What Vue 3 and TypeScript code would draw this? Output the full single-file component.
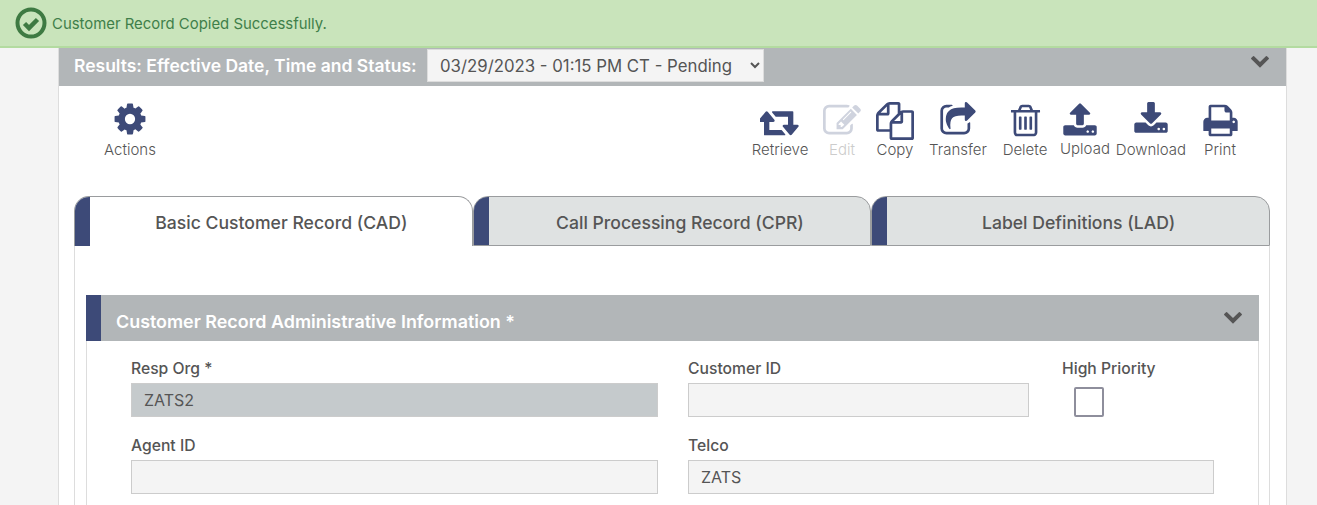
<script setup lang="ts">
interface Tool { label: string; width: number; icon: string; box: string; size: number; shift?: number; disabled?: boolean; raised?: boolean }

const chevron = 'M1683 808l-742 741q-19 19-45 19t-45-19l-742-741q-19-19-19-45.500t19-45.500l166-165q19-19 45-19t45 19l531 531 531-531q19-19 45-19t45 19l166 165q19 19 19 45.500t-19 45.500z'
const cog = 'M1152 896q0-106-75-181t-181-75-181 75-75 181 75 181 181 75 181-75 75-181zm512-109v222q0 12-8 23t-20 13l-185 28q-19 54-39 91 35 50 107 138 10 12 10 25t-9 23q-27 37-99 108t-94 71q-12 0-26-9l-138-108q-44 23-91 38-16 136-29 186-7 28-36 28h-222q-14 0-24.500-8.500t-11.500-21.500l-28-184q-49-16-90-37l-141 107q-10 9-25 9-14 0-25-11-126-114-165-168-7-10-7-23 0-12 8-23 15-21 51-66.500t54-70.500q-27-50-41-99l-183-27q-13-2-21-12.500t-8-23.500v-222q0-12 8-23t19-13l186-28q14-46 39-92-40-57-107-138-10-12-10-24 0-10 9-23 26-36 98.500-107.500t94.500-71.500q13 0 26 10l138 107q44-23 91-38 16-136 29-186 7-28 36-28h222q14 0 24.500 8.500t11.500 21.500l28 184q49 16 90 37l142-107q9-9 24-9 13 0 25 10 129 119 165 170 7 8 7 22 0 12-8 23-15 21-51 66.500t-54 70.500q26 50 41 98l183 28q13 2 21 12.500t8 23.500z'

const tools: Tool[] = [
  { label: 'Retrieve', width: 60, size: 40, box: '0 0 1920 1792', icon: 'M1216 1504q0 13-9.500 22.500t-22.500 9.500h-960q-8 0-13.500-2t-9-7-5.500-8-3-11.500-1-11.500v-600h-192q-26 0-45-19t-19-45q0-24 15-41l320-384q19-22 49-22t49 22l320 384q15 17 15 41 0 26-19 45t-45 19h-192v384h576q16 0 25 11l160 192q7 10 7 21zm640-416q0 24-15 41l-320 384q-20 23-49 23t-49-23l-320-384q-15-17-15-41 0-26 19-45t45-19h192v-384h-576q-16 0-25-12l-160-192q-7-9-7-20 0-13 9.500-22.500t22.500-9.500h960q8 0 13.500 2t9 7 5.500 8 3 11.500 1 11.500v600h192q26 0 45 19t19 45z' },
  { label: 'Edit', width: 64, size: 38, box: '0 0 1792 1792', disabled: true, icon: 'M888 1184l116-116-152-152-116 116v56h96v96h56zm440-720q-16-16-33 1l-350 350q-17 17-1 33t33-1l350-350q17-17 1-33zm80 594v190q0 119-84.500 203.500t-203.500 84.500h-832q-119 0-203.500-84.500t-84.500-203.500v-832q0-119 84.500-203.500t203.500-84.500h832q63 0 117 25 15 7 18 23 3 17-9 29l-49 49q-14 14-32 8-23-6-45-6h-832q-66 0-113 47t-47 113v832q0 66 47 113t113 47h832q66 0 113-47t47-113v-126q0-13 9-22l64-64q15-15 35-7t20 29zm-96-738l288 288-672 672h-288v-288zm444 132l-92 92-288-288 92-92q28-28 68-28t68 28l152 152q28 28 28 68t-28 68z' },
  { label: 'Copy', width: 42, size: 38, box: '0 0 1792 1792', icon: 'M1696 384q40 0 68 28t28 68v1216q0 40-28 68t-68 28h-960q-40 0-68-28t-28-68v-288h-544q-40 0-68-28t-28-68v-672q0-40 20-88t48-76l408-408q28-28 76-48t88-20h416q40 0 68 28t28 68v328q68-40 128-40h416zm-544 213l-299 299h299v-299zm-640-384l-299 299h299v-299zm196 647l316-316v-416h-384v416q0 40-28 68t-68 28h-416v640h512v-256q0-40 20-88t48-76zm956 804v-1152h-384v416q0 40-28 68t-68 28h-416v640h896z' },
  { label: 'Transfer', width: 84, size: 38, box: '0 0 1792 1792', icon: 'M1472 989v259q0 119-84.500 203.500t-203.500 84.500h-832q-119 0-203.500-84.500t-84.500-203.500v-832q0-119 84.500-203.500t203.500-84.500h255q13 0 22.500 9.500t9.500 22.500q0 27-26 32-77 26-133 60-10 4-16 4h-112q-66 0-113 47t-47 113v832q0 66 47 113t113 47h832q66 0 113-47t47-113v-214q0-19 18-29 28-13 54-37 16-16 35-8 21 9 21 29zm237-496l-384 384q-18 19-45 19-12 0-25-5-39-17-39-59v-192h-160q-323 0-438 131-119 137-74 473 3 23-20 34-8 2-12 2-16 0-26-13-10-14-21-31t-39.500-68.500-49.500-99.500-38.500-114-17.500-122q0-49 3.500-91t14-90 28-88 47-81.500 68.500-74 94.500-61.500 124.500-48.500 159.500-30.500 196.500-11h160v-192q0-42 39-59 13-5 25-5 26 0 45 19l384 384q19 19 19 45t-19 45z' },
  { label: 'Delete', width: 50, size: 37, box: '0 0 1792 1792', icon: 'M704 736v576q0 14-9 23t-23 9h-64q-14 0-23-9t-9-23v-576q0-14 9-23t23-9h64q14 0 23 9t9 23zm256 0v576q0 14-9 23t-23 9h-64q-14 0-23-9t-9-23v-576q0-14 9-23t23-9h64q14 0 23 9t9 23zm256 0v576q0 14-9 23t-23 9h-64q-14 0-23-9t-9-23v-576q0-14 9-23t23-9h64q14 0 23 9t9 23zm128 724v-948h-896v948q0 22 7 40.500t14.500 27 10.500 8.500h832q3 0 10.500-8.500t14.500-27 7-40.500zm-672-1076h448l-48-117q-7-9-17-11h-317q-10 2-17 11zm928 32v64q0 14-9 23t-23 9h-96v948q0 83-47 143.500t-113 60.500h-832q-66 0-113-58.500t-47-141.500v-952h-96q-14 0-23-9t-9-23v-64q0-14 9-23t23-9h309l70-167q15-37 54-63t79-26h320q40 0 79 26t54 63l70 167h309q14 0 23 9t9 23z' },
  { label: 'Upload', width: 70, size: 36, shift: -10, box: '0 0 1792 1792', raised: true, icon: 'M1344 1472q0-26-19-45t-45-19-45 19-19 45 19 45 45 19 45-19 19-45zm256 0q0-26-19-45t-45-19-45 19-19 45 19 45 45 19 45-19 19-45zm128-224v320q0 40-28 68t-68 28h-1472q-40 0-68-28t-28-68v-320q0-40 28-68t68-28h427q21 56 70.500 92t110.500 36h256q61 0 110.500-36t70.500-92h427q40 0 68 28t28 68zm-325-648q-17 40-59 40h-256v448q0 26-19 45t-45 19h-256q-26 0-45-19t-19-45v-448h-256q-42 0-59-40-17-39 14-69l448-448q18-19 45-19t45 19l448 448q31 30 14 69z' },
  { label: 'Download', width: 62, size: 36, box: '0 0 1792 1792', icon: 'M1344 1344q0-26-19-45t-45-19-45 19-19 45 19 45 45 19 45-19 19-45zm256 0q0-26-19-45t-45-19-45 19-19 45 19 45 45 19 45-19 19-45zm128-224v320q0 40-28 68t-68 28h-1472q-40 0-68-28t-28-68v-320q0-40 28-68t68-28h465l135 136q58 56 136 56t136-56l136-136h464q40 0 68 28t28 68zm-325-569q17 41-14 70l-448 448q-18 19-45 19t-45-19l-448-448q-31-29-14-70 17-39 59-39h256v-448q0-26 19-45t45-19h256q26 0 45 19t19 45v448h256q42 0 59 39z' },
  { label: 'Print', width: 76, size: 37, box: '0 0 1792 1792', icon: 'M448 1536h896v-256h-896v256zm0-640h896v-384h-160q-40 0-68-28t-28-68v-160h-640v640zm1152 64q0-26-19-45t-45-19-45 19-19 45 19 45 45 19 45-19 19-45zm128 0v416q0 13-9.500 22.500t-22.500 9.500h-224v160q0 40-28 68t-68 28h-960q-40 0-68-28t-28-68v-160h-224q-13 0-22.500-9.500t-9.500-22.500v-416q0-79 56.500-135.500t135.500-56.500h64v-544q0-40 28-68t68-28h672q40 0 88 20t76 48l152 152q28 28 48 76t20 88v256h64q79 0 135.500 56.500t56.500 135.500z' },
]

const tabs = [
  { label: 'Basic Customer Record (CAD)', active: true },
  { label: 'Call Processing Record (CPR)', active: false },
  { label: 'Label Definitions (LAD)', active: false },
]

function iconStyle(t: Tool) {
  return {
    width: t.size + 'px',
    height: t.size + 'px',
    marginBottom: 40 - t.size + 'px',
    marginLeft: (t.shift ?? 0) + 'px',
  }
}
</script>

<template>
  <div class="page">
    <div class="banner">
      <svg class="ok" viewBox="0 0 32 32" aria-hidden="true">
        <circle cx="16" cy="16" r="13.500" fill="none" stroke="#3e7a42" stroke-width="4" />
        <path d="M9.500 16.500l4.500 4.500 8.500-8.500" fill="none" stroke="#3e7a42" stroke-width="4.500" />
      </svg>
      <span class="banner-text">Customer Record Copied Successfully.</span>
    </div>

    <main class="card">
      <header class="results">
        <label class="results-label" for="eff">Results: Effective Date, Time and Status:</label>
        <select id="eff" class="results-select">
          <option>03/29/2023 - 01:15 PM CT - Pending</option>
        </select>
        <svg class="chev results-chev" viewBox="0 0 1792 1792" aria-hidden="true"><path :d="chevron" /></svg>
      </header>

      <div class="toolbar">
        <button class="tool actions">
          <svg class="tool-icon cog" viewBox="0 0 1792 1792" aria-hidden="true"><path :d="cog" /></svg>
          <span>Actions</span>
        </button>
        <div class="tool-group">
          <button
            v-for="t in tools"
            :key="t.label"
            class="tool"
            :class="{ disabled: t.disabled, raised: t.raised }"
            :style="{ width: t.width + 'px' }"
          >
            <svg class="tool-icon" :style="iconStyle(t)" :viewBox="t.box" aria-hidden="true"><path :d="t.icon" /></svg>
            <span>{{ t.label }}</span>
          </button>
        </div>
      </div>

      <div class="tabs">
        <div v-for="t in tabs" :key="t.label" class="tab" :class="{ active: t.active }">
          <span class="tab-mark"></span>
          <span class="tab-label">{{ t.label }}</span>
        </div>
      </div>

      <div class="panel">
        <section class="section">
          <div class="section-head">
            <h2>Customer Record Administrative Information *</h2>
            <svg class="chev" viewBox="0 0 1792 1792" aria-hidden="true"><path :d="chevron" /></svg>
          </div>
          <div class="section-body">
            <div class="row">
              <div class="field w527">
                <label>Resp Org *</label>
                <input class="readonly" value="ZATS2" readonly />
              </div>
              <div class="field w341">
                <label>Customer ID</label>
                <input value="" readonly />
              </div>
              <div class="field priority">
                <label>High Priority</label>
                <span class="check"></span>
              </div>
            </div>
            <div class="row">
              <div class="field w527">
                <label>Agent ID</label>
                <input value="" readonly />
              </div>
              <div class="field w526">
                <label>Telco</label>
                <input value="ZATS" readonly />
              </div>
            </div>
          </div>
        </section>
      </div>
    </main>
  </div>
</template>

<style>
html, body { margin: 0; height: 505px; overflow: hidden; background: #f4f4f4; }
</style>

<style scoped>
.page {
  width: 1317px;
  height: 505px;
  overflow: hidden;
  font-family: Inter, "Liberation Sans", sans-serif;
  color: #555;
}
.banner {
  height: 46px;
  box-sizing: content-box;
  display: flex;
  align-items: center;
  gap: 5px;
  padding-left: 15px;
  background: #c9e4bb;
  border-bottom: 2px solid #b3dba0;
  color: #3f7f4a;
  font-size: 14.900px;
}
.banner-text { margin-top: 2px; }
.ok { width: 32px; height: 32px; flex: none; }
.card {
  width: 1229px;
  margin-left: 58px;
  box-sizing: border-box;
  background: #fff;
  border-left: 1px solid #ddd;
  border-right: 1px solid #ddd;
  height: 457px;
}
.results {
  height: 38px;
  display: flex;
  align-items: flex-start;
  background: #b2b6b8;
  padding-left: 15px;
}
.results-label {
  color: #fff;
  font-weight: 600;
  font-size: 17.500px;
  line-height: 36px;
  width: 353px;
  white-space: nowrap;
}
.results-select {
  width: 337px;
  height: 33px;
  margin-top: 1px;
  padding-left: 8px;
  background: #f4f4f4;
  border: 1px solid #ddd;
  border-radius: 0;
  font-family: inherit;
  font-size: 16.800px;
  color: #555;
}
.chev { width: 20px; height: 20px; fill: #555; flex: none; }
.results-chev { margin-left: auto; margin-right: 16px; margin-top: 2px; }
.toolbar {
  height: 110px;
  display: flex;
  justify-content: space-between;
  padding: 16px 28px 0 28px;
  box-sizing: border-box;
}
.tool {
  border: 0;
  background: none;
  padding: 0;
  font-family: inherit;
  font-size: 15px;
  font-weight: 300;
  color: #555;
  display: flex;
  flex-direction: column;
  align-items: center;
  white-space: nowrap;
  height: 60px;
}
.tool span { line-height: 18px; margin-top: -1px; }
.tool-icon { fill: #3d4a78; flex: none; }
.cog { width: 36px; height: 36px; margin-top: -1px; margin-bottom: 5px; }
.actions { width: 86px; }
.tool-group { display: flex; }
.tool.disabled { color: #ccc; }
.tool.disabled .tool-icon { fill: #cfd3de; }
.tool.raised span { margin-top: -2px; }
.tabs { display: flex; padding-left: 15px; height: 50px; }
.tab {
  width: 398.670px;
  height: 50px;
  box-sizing: border-box;
  position: relative;
  display: flex;
  align-items: center;
  justify-content: center;
  background: #dfe2e2;
  border: 1px solid #9a9c9e;
  border-radius: 15px 15px 0 0;
  font-size: 17.600px;
  font-weight: 500;
  color: #555;
  padding-left: 16px;
  padding-top: 2px;
  overflow: hidden;
}
.tab.active { background: #fff; border-bottom: 0; }
.tab-mark {
  position: absolute;
  left: 0;
  top: 0;
  bottom: 0;
  width: 15px;
  background: #3d4a78;
}
.panel {
  margin-left: 15px;
  width: 1196px;
  box-sizing: border-box;
  border-left: 1px solid #ddd;
  border-right: 1px solid #ddd;
  padding: 49px 10px 0 11px;
}
.section { width: 1173px; box-sizing: border-box; border: 1px solid #ddd; border-top: 0; }
.section-head {
  height: 46px;
  margin-left: -1px;
  margin-right: -1px;
  box-sizing: border-box;
  display: flex;
  align-items: center;
  justify-content: space-between;
  background: #b2b6b8;
  border-left: 15px solid #3d4a78;
  padding: 0 16px 0 15px;
}
.section-head h2 {
  margin: 6px 0 0;
  color: #fff;
  font-size: 17.900px;
  font-weight: 600;
}
.section-head .chev { margin-top: -4px; }
.section-body { padding: 19px 0 0 44px; }
.row { display: flex; gap: 30px; margin-bottom: 20px; }
.field { display: flex; flex-direction: column; }
.field label { font-size: 15.700px; font-weight: 500; line-height: 18px; margin-bottom: 5px; color: #555; white-space: nowrap; }
.field input {
  height: 34px;
  box-sizing: border-box;
  border: 1px solid #ccc;
  background: #f4f4f4;
  font-family: inherit;
  font-size: 16px;
  color: #555;
  padding: 0 12px;
  outline: none;
  width: 100%;
}
.field input.readonly { background: #c5cacc; }
.w527 { width: 527px; }
.w341 { width: 341px; }
.w526 { width: 526px; }
.priority { margin-left: 3px; }
.check {
  width: 30px;
  height: 30px;
  box-sizing: border-box;
  border: 2px solid #8e8e9c;
  border-radius: 2px;
  margin: 4px 0 0 12px;
  background: #fff;
}
</style>
